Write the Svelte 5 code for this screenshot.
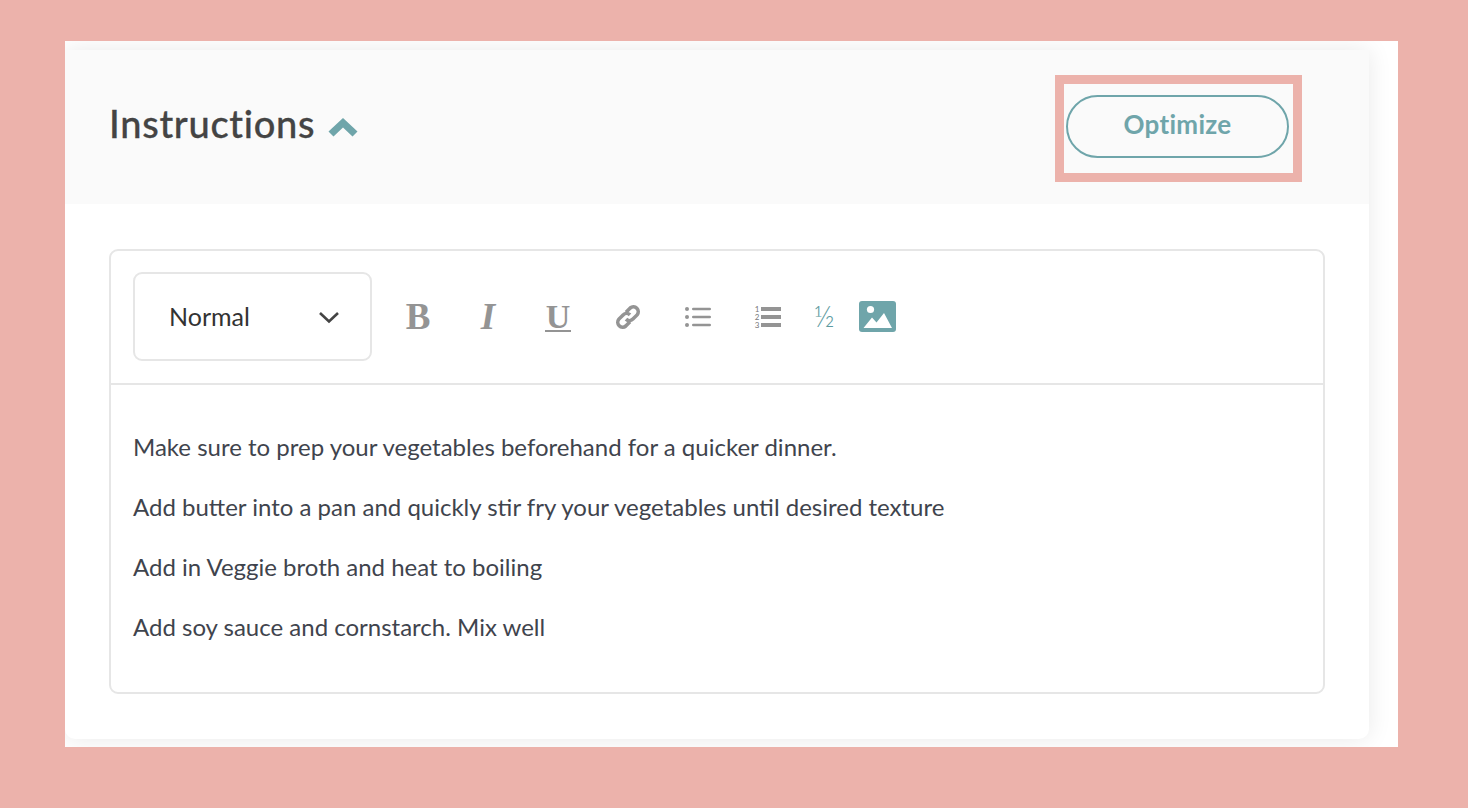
<script lang="ts">
	const paragraphs = [
		'Make sure to prep your vegetables beforehand for a quicker dinner.',
		'Add butter into a pan and quickly stir fry your vegetables until desired texture',
		'Add in Veggie broth and heat to boiling',
		'Add soy sauce and cornstarch. Mix well'
	];
</script>

<main class="page">
	<div class="frame">
		<section class="card">
			<header class="card-header">
				<h2 class="title">
					Instructions
					<svg class="caret" viewBox="0 0 30 20" width="30" height="20" aria-hidden="true">
						<path d="M15 1 L29.5 14.5 L24.5 19.5 L15 10.5 L5.5 19.5 L0.5 14.5 Z" />
					</svg>
				</h2>
				<div class="highlight">
					<button class="optimize" type="button">Optimize</button>
				</div>
			</header>

			<div class="body">
				<div class="editor">
					<div class="toolbar">
						<div class="select">
							<span>Normal</span>
							<svg viewBox="0 0 22 14" width="22" height="14" aria-hidden="true">
								<path d="M2 3 L11 11.5 L20 3" />
							</svg>
						</div>
						<div class="tools">
							<span class="tool serif bold">B</span>
							<span class="tool serif bold italic">I</span>
							<span class="tool"><span class="serif under">U</span></span>
							<span class="tool">
								<svg viewBox="0 0 26 26" width="26" height="26" aria-hidden="true" class="link">
									<path d="M11 8.2 L15.2 4 a4.9 4.9 0 0 1 6.9 6.9 L17.9 15.1 a4.9 4.9 0 0 1 -6.9 0" />
									<path d="M15 17.8 L10.8 22 a4.9 4.9 0 0 1 -6.9 -6.9 L8.1 10.9 a4.9 4.9 0 0 1 6.9 0" />
								</svg>
							</span>
							<span class="tool">
								<svg viewBox="0 0 26 20" width="26" height="20" aria-hidden="true" class="bars">
									<circle cx="2" cy="2" r="2" />
									<circle cx="2" cy="10" r="2" />
									<circle cx="2" cy="18" r="2" />
									<rect x="7" y="0.7" width="19" height="2.6" rx="1.3" />
									<rect x="7" y="8.7" width="19" height="2.6" rx="1.3" />
									<rect x="7" y="16.7" width="19" height="2.6" rx="1.3" />
								</svg>
							</span>
							<span class="tool">
								<span class="ordered">
									<span class="digits"><i>1</i><i>2</i><i>3</i></span>
									<span class="lines"><b></b><b></b><b></b></span>
								</span>
							</span>
							<span class="tool fraction">½</span>
							<span class="image-tool">
								<svg viewBox="0 0 37 31" width="37" height="31" aria-hidden="true">
									<rect width="37" height="31" rx="3" fill="#6fa5aa" />
									<circle cx="11.5" cy="8.5" r="3.6" fill="#fff" />
									<path d="M4.5 27 L13 16.5 L17.5 21.5 L25 12 L33 27 Z" fill="#fff" />
								</svg>
							</span>
						</div>
					</div>
					<div class="content">
						{#each paragraphs as text}
							<p>{text}</p>
						{/each}
					</div>
				</div>
			</div>
		</section>
	</div>
</main>

<style>
	:global(body) {
		margin: 0;
		background: #ecb2ab;
	}

	.page {
		height: 808px;
		padding: 41px 70px 0 65px;
		box-sizing: border-box;
		font-family: Lato, 'Open Sans', sans-serif;
	}

	.frame {
		height: 706px;
		padding: 9px 29px 8px 0;
		box-sizing: border-box;
		background: #fff;
		overflow: hidden;
	}

	.card {
		height: 100%;
		background: #fff;
		border-radius: 0 0 10px 10px;
		box-shadow: 0 0 24px rgba(0, 0, 0, 0.09);
		overflow: hidden;
	}

	.card-header {
		height: 154px;
		padding: 25px 67px 0 44px;
		box-sizing: border-box;
		display: flex;
		justify-content: space-between;
		align-items: flex-start;
		background: #fafafa;
	}

	.title {
		margin: 23px 0 0;
		display: flex;
		align-items: center;
		gap: 13px;
		font-size: 38px;
		line-height: 50px;
		font-weight: 500;
		letter-spacing: 0.7px;
		color: #444;
		-webkit-text-stroke: 0.3px #444;
	}

	.caret {
		margin-top: 8px;
		fill: #6fa5aa;
		stroke: none;
	}

	.highlight {
		padding: 11px 4px 15px 2px;
		border: 9px solid #ecb2ab;
	}

	.optimize {
		display: block;
		width: 223px;
		height: 63px;
		padding: 0 0 5px;
		border: 2px solid #6fa5aa;
		border-radius: 32px;
		background: transparent;
		color: #6fa5aa;
		font: 700 26px Lato, sans-serif;
		letter-spacing: 0.3px;
	}

	.body {
		padding: 45px 44px 0;
	}

	.editor {
		height: 445px;
		box-sizing: border-box;
		border: 2px solid #e6e6e6;
		border-radius: 9px;
	}

	.toolbar {
		height: 134px;
		padding: 21px 22px 0;
		box-sizing: border-box;
		display: flex;
		align-items: flex-start;
		gap: 11px;
		border-bottom: 2px solid #e6e6e6;
	}

	.select {
		width: 239px;
		height: 89px;
		padding: 0 30px 2px 34px;
		box-sizing: border-box;
		display: flex;
		align-items: center;
		justify-content: space-between;
		border: 2px solid #e6e6e6;
		border-radius: 9px;
		font-size: 25px;
		color: #333;
	}

	.select svg {
		margin-top: 2px;
		fill: none;
		stroke: #444;
		stroke-width: 2.6;
	}

	.tools {
		height: 89px;
		display: flex;
		align-items: center;
	}

	.tool {
		width: 70px;
		display: flex;
		justify-content: center;
		align-items: center;
		color: #949494;
	}

	.serif {
		font-family: 'Liberation Serif', serif;
		font-size: 37px;
		line-height: 40px;
	}

	.bold {
		font-weight: 700;
	}

	.italic {
		font-style: italic;
	}

	.under {
		display: block;
		width: 26px;
		height: 28px;
		border-bottom: 2px solid #949494;
		font-size: 34px;
		font-weight: 700;
		line-height: 30px;
		text-align: center;
	}

	.link {
		fill: none;
		stroke: #949494;
		stroke-width: 3.6;
	}

	.bars {
		fill: #949494;
	}

	.ordered {
		display: flex;
		align-items: center;
		gap: 2px;
	}

	.digits {
		display: flex;
		flex-direction: column;
		font-size: 8px;
		line-height: 8px;
		color: #777;
	}

	.digits i {
		font-style: normal;
	}

	.lines {
		display: flex;
		flex-direction: column;
		gap: 4px;
	}

	.lines b {
		display: block;
		width: 20px;
		height: 4px;
		background: #949494;
	}

	.fraction {
		width: 42px;
		padding-bottom: 3px;
		color: #5c9aa0;
		font-size: 29px;
		font-weight: 300;
	}

	.image-tool {
		display: flex;
		margin-left: 14px;
	}

	.content {
		padding: 32px 22px 0;
	}

	.content p {
		margin: 0;
		height: 60px;
		font-size: 24px;
		line-height: 60px;
		color: #3f444d;
	}
</style>
